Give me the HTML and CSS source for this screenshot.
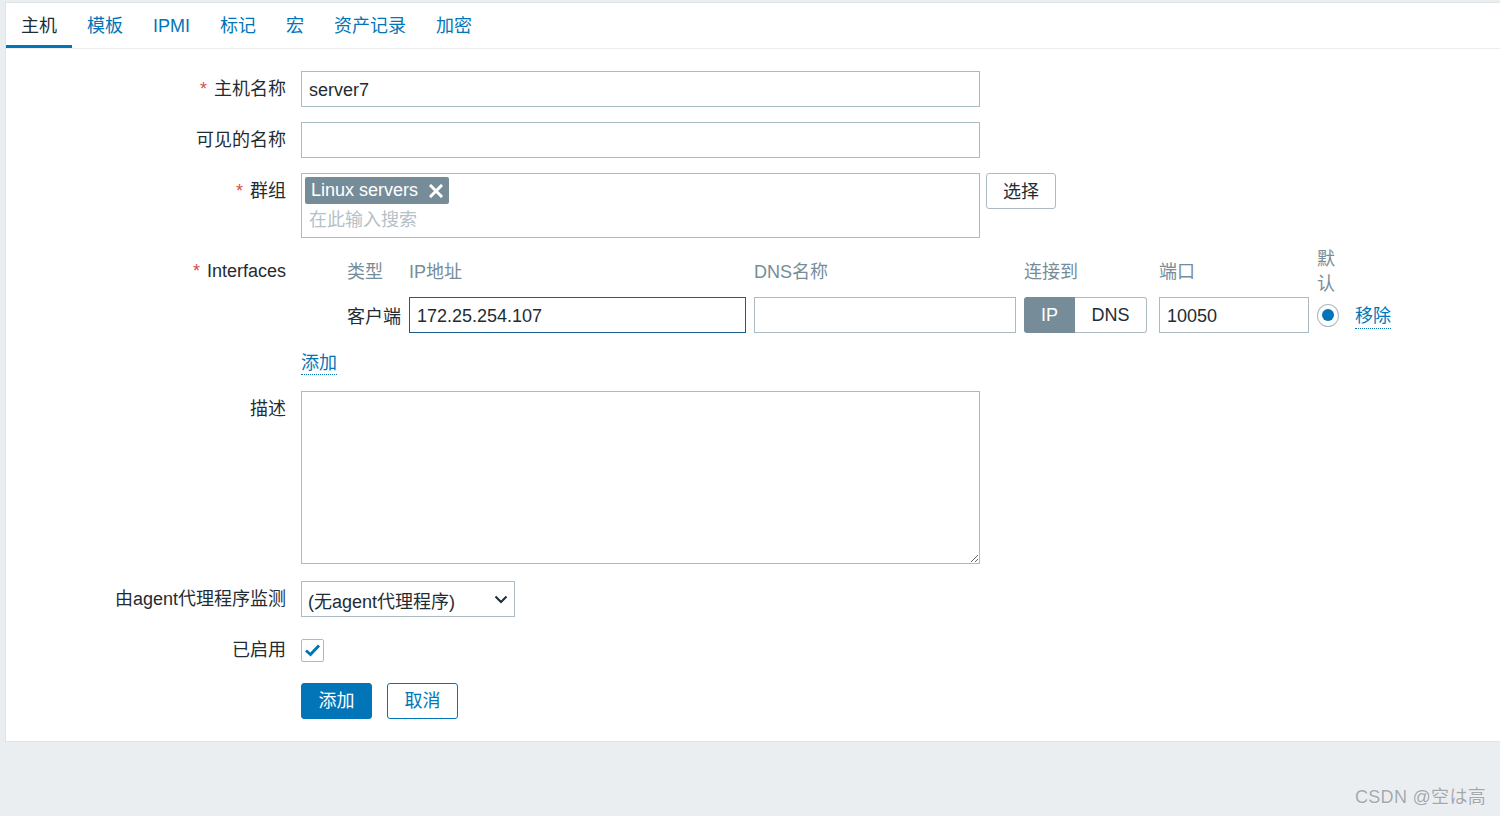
FILE: index.html
```html
<!DOCTYPE html>
<html lang="zh">
<head>
<meta charset="utf-8">
<title>主机</title>
<link rel="stylesheet" href="styles.css">
</head>
<body>
<div class="panel">
  <ul class="tabs">
    <li class="tab active">主机</li>
    <li class="tab">模板</li>
    <li class="tab">IPMI</li>
    <li class="tab">标记</li>
    <li class="tab">宏</li>
    <li class="tab">资产记录</li>
    <li class="tab">加密</li>
  </ul>
  <div class="form">
    <div class="row">
      <div class="lbl"><span class="star">*</span>主机名称</div>
      <div class="field"><div class="input wide">server7</div></div>
    </div>
    <div class="row r15">
      <div class="lbl">可见的名称</div>
      <div class="field"><div class="input wide"></div></div>
    </div>
    <div class="row r15">
      <div class="lbl"><span class="star">*</span>群组</div>
      <div class="field group-field">
        <div class="multiselect">
          <span class="tag">Linux servers<svg class="tag-x" width="14" height="14" viewBox="0 0 14 14"><path d="M2 2L12 12M12 2L2 12" stroke="#fff" stroke-width="3" stroke-linecap="square"/></svg></span>
          <div class="placeholder">在此输入搜索</div>
        </div>
        <div class="btn-alt">选择</div>
      </div>
    </div>
    <div class="row r8">
      <div class="lbl lbl-iface"><span class="star">*</span>Interfaces</div>
      <div class="iface">
        <div class="ih">类型</div>
        <div class="ih">IP地址</div>
        <div class="ih">DNS名称</div>
        <div class="ih">连接到</div>
        <div class="ih">端口</div>
        <div class="ih">默认</div>
        <div class="ih"></div>
        <div class="ic type">客户端</div>
        <div class="ic"><div class="input focus ip">172.25.254.107</div></div>
        <div class="ic"><div class="input dns"></div></div>
        <div class="ic">
          <div class="seg"><span class="seg-on">IP</span><span class="seg-off">DNS</span></div>
        </div>
        <div class="ic"><div class="input port">10050</div></div>
        <div class="ic"><span class="radio"><span class="radio-dot"></span></span></div>
        <div class="ic remove"><a class="link">移除</a></div>
      </div>
    </div>
    <div class="row r18">
      <div class="lbl empty"></div>
      <div class="field"><a class="link add">添加</a></div>
    </div>
    <div class="row r16">
      <div class="lbl">描述</div>
      <div class="field"><textarea class="textarea"></textarea></div>
    </div>
    <div class="row r17">
      <div class="lbl">由agent代理程序监测</div>
      <div class="field">
        <div class="select"><span>(无agent代理程序)</span><svg width="14" height="9" viewBox="0 0 14 9"><path d="M1.5 1.5L7 7L12.5 1.5" fill="none" stroke="#1f2c33" stroke-width="2"/></svg></div>
      </div>
    </div>
    <div class="row r15">
      <div class="lbl">已启用</div>
      <div class="field center">
        <span class="checkbox"><svg width="17" height="14" viewBox="0 0 17 14"><path d="M2 7.5L6.5 11.5L15 2.5" fill="none" stroke="#0275b8" stroke-width="3"/></svg></span>
      </div>
    </div>
    <div class="row r15">
      <div class="lbl empty"></div>
      <div class="field buttons">
        <div class="btn-primary">添加</div>
        <div class="btn-outline">取消</div>
      </div>
    </div>
  </div>
</div>
<div class="watermark">CSDN @空は高</div>
</body>
</html>
```

FILE: styles.css
```css
html, body {
  margin: 0;
  padding: 0;
}
body {
  background: #ebeef0;
  font-family: "Liberation Sans", Arial, "Noto Sans CJK SC", sans-serif;
  font-size: 18px;
  color: #1f2c33;
  height: 816px;
  overflow: hidden;
  position: relative;
}
.panel {
  margin: 2px 0 0 5px;
  background: #fff;
  border: 1px solid #dfe4e7;
  border-right: none;
  padding-bottom: 22px;
}
.tabs {
  list-style: none;
  margin: 0;
  padding: 0;
  display: flex;
  border-bottom: 1px solid #ebeef0;
}
.tab {
  padding: 0 15px;
  height: 42px;
  line-height: 46px;
  border-bottom: 3px solid transparent;
  color: #0275b8;
}
.tab.active {
  color: #1f2c33;
  border-bottom-color: #0275b8;
}
.form {
  padding-top: 22px;
}
.row {
  display: grid;
  grid-template-columns: 280px 1fr;
  column-gap: 15px;
  align-items: start;
}
.r8 { margin-top: 8px; }
.r15 { margin-top: 15px; }
.r16 { margin-top: 16px; }
.r17 { margin-top: 17px; }
.r18 { margin-top: 18px; }
.lbl {
  text-align: right;
  height: 36px;
  line-height: 37px;
  white-space: nowrap;
}
.lbl.empty {
  height: auto;
}
.lbl-iface {
  margin-top: 7px;
}
.star {
  color: #d64e4e;
  margin-right: 7px;
}
.field {
  display: flex;
}
.field.center {
  height: 36px;
  align-items: center;
}
.input {
  box-sizing: border-box;
  height: 36px;
  border: 1px solid #acbbc2;
  background: #fff;
  padding: 0 7px;
  line-height: 36px;
  white-space: nowrap;
  overflow: hidden;
}
.input.wide { width: 679px; }
.input.focus { border-color: #1a5c8e; }
.input.ip { width: 337px; }
.input.dns { width: 262px; }
.input.port { width: 150px; }
.group-field {
  gap: 6px;
  align-items: flex-start;
}
.multiselect {
  box-sizing: border-box;
  width: 679px;
  height: 65px;
  border: 1px solid #acbbc2;
  padding: 3px;
}
.tag {
  display: inline-flex;
  align-items: center;
  height: 27px;
  background: #768d99;
  color: #fff;
  border-radius: 2px;
  padding: 0 6px;
  line-height: 29px;
}
.tag-x {
  margin-left: 11px;
}
.placeholder {
  color: #b5c1c7;
  padding-left: 4px;
  line-height: 32px;
}
.btn-alt {
  box-sizing: border-box;
  width: 70px;
  height: 36px;
  border: 1px solid #acbbc2;
  border-radius: 3px;
  text-align: center;
  line-height: 36px;
  background: #fff;
}
.iface {
  display: grid;
  grid-template-columns: 54px 337px 262px 127px 150px 22px auto;
  column-gap: 8px;
  row-gap: 0;
  padding-left: 46px;
  align-items: center;
}
.ih {
  color: #768d99;
  line-height: 25px;
  padding-top: 1px;
}
.ic {
  display: flex;
  align-items: center;
  height: 36px;
}
.ic.type {
  white-space: nowrap;
}
.seg {
  display: flex;
  height: 36px;
  width: 123px;
  box-sizing: border-box;
}
.seg-on {
  width: 51px;
  background: #768d99;
  color: #fff;
  text-align: center;
  line-height: 37px;
  border-radius: 3px 0 0 3px;
}
.seg-off {
  flex: 1;
  box-sizing: border-box;
  border: 1px solid #acbbc2;
  border-left: none;
  border-radius: 0 3px 3px 0;
  text-align: center;
  line-height: 35px;
}
.radio {
  box-sizing: border-box;
  width: 23px;
  height: 23px;
  border: 1px solid #acbbc2;
  border-radius: 50%;
  display: flex;
  align-items: center;
  justify-content: center;
  background: #fff;
}
.radio-dot {
  width: 12px;
  height: 12px;
  border-radius: 50%;
  background: #0275b8;
}
.remove {
  padding-left: 8px;
  padding-top: 3px;
  box-sizing: border-box;
}
.link {
  color: #0275b8;
  border-bottom: 1px dotted #0275b8;
  line-height: 23px;
  cursor: pointer;
}
.add {
  display: inline-block;
  padding-top: 1px;
  line-height: 22px;
}
.textarea {
  box-sizing: border-box;
  width: 679px;
  height: 173px;
  border: 1px solid #acbbc2;
  border-radius: 0;
  margin: 0;
  padding: 5px 7px;
  font: inherit;
  resize: both;
  outline: none;
}
.select {
  box-sizing: border-box;
  width: 214px;
  height: 36px;
  border: 1px solid #acbbc2;
  display: flex;
  align-items: center;
  justify-content: space-between;
  padding: 1px 6px 0 6px;
  white-space: nowrap;
}
.checkbox {
  box-sizing: border-box;
  width: 23px;
  height: 23px;
  border: 1px solid #acbbc2;
  border-radius: 2px;
  display: flex;
  align-items: center;
  justify-content: center;
}
.buttons {
  gap: 15px;
}
.btn-primary, .btn-outline {
  box-sizing: border-box;
  width: 71px;
  height: 36px;
  border-radius: 3px;
  text-align: center;
  line-height: 35px;
}
.btn-primary {
  background: #0275b8;
  border: 1px solid #0275b8;
  color: #fff;
}
.btn-outline {
  border: 1px solid #0275b8;
  color: #0275b8;
  background: #fff;
}
.watermark {
  position: absolute;
  right: 14px;
  bottom: 8px;
  color: #a3a8ad;
  font-size: 18px;
  letter-spacing: 0.3px;
  text-shadow: 0 0 1px #ffffff;
}
```
